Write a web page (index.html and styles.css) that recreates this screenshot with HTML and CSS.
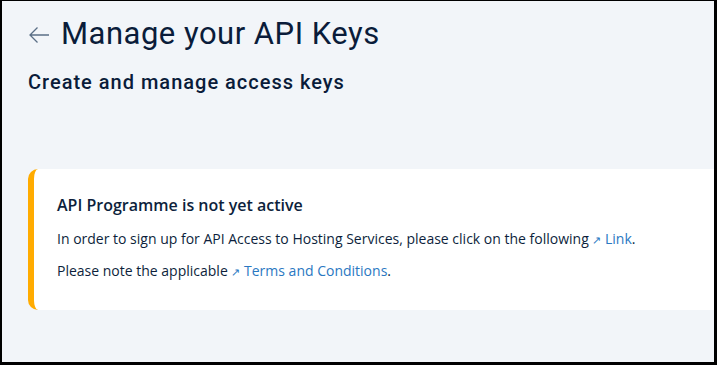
FILE: index.html
```html
<!DOCTYPE html>
<html lang="en">
<head>
    <meta charset="UTF-8">
    <title>Manage your API Keys</title>
    <link rel="stylesheet" href="styles.css">
</head>
<body>
    <div class="frame">

        <!-- Page header -->
        <div class="page-head">
            <a href="#" class="back-link" aria-label="Back">
                <svg width="22" height="18" viewBox="0 0 22 18">
                    <path d="M21 9H2M9.5 1.5L2 9l7.5 7.5" fill="none" stroke="#5b6f86" stroke-width="1.3"/>
                </svg>
            </a>
            <h1>Manage your API Keys</h1>
        </div>
        <h2>Create and manage access keys</h2>

        <!-- Notice -->
        <div class="notice">
            <h3>API Programme is not yet active</h3>
            <p>In order to sign up for API Access to Hosting Services, please click on the following
                <a href="#"><span class="ext">&#8599;</span> Link</a>.</p>
            <p>Please note the applicable <a href="#"><span class="ext">&#8599;</span> Terms and Conditions</a>.</p>
        </div>

    </div>
</body>
</html>
```

FILE: styles.css
```css
/* Reset */
* {
    margin: 0;
    padding: 0;
    box-sizing: border-box;
}

body {
    width: 717px;
    height: 365px;
    font-family: 'Open Sans', sans-serif;
    color: #0d1f3c;
    overflow: hidden;
}

/* Frame */
.frame {
    height: 365px;
    background: #f2f5f9;
    border-style: solid;
    border-color: #000;
    border-width: 1px 3px 3px 2px;
    padding: 14px 0 0 26px;
}

/* Header */
.page-head {
    display: flex;
    align-items: center;
    gap: 11px;
}

.back-link {
    display: flex;
    padding-top: 2px;
}

h1 {
    font-family: 'Roboto', sans-serif;
    font-size: 31px;
    font-weight: 400;
    color: #0a1c3a;
    letter-spacing: 0.5px;
}

h2 {
    font-family: 'Roboto', sans-serif;
    font-size: 20px;
    font-weight: 500;
    color: #0a1c3a;
    margin-top: 18px;
    letter-spacing: 1px;
}

/* Notice card */
.notice {
    margin-top: 75px;
    height: 141px;
    background: #fff;
    border-left: 6px solid #ffab00;
    border-radius: 10px 0 0 10px;
    padding: 25px 0 0 23px;
}

h3 {
    font-size: 16px;
    font-weight: 600;
    color: #0d1f3c;
    margin-bottom: 13px;
}

.notice p {
    font-size: 14px;
    color: #0d1f3c;
    margin-bottom: 13px;
}

.notice a {
    color: #2a78c2;
    text-decoration: none;
}

.ext {
    font-size: 11px;
}
```
